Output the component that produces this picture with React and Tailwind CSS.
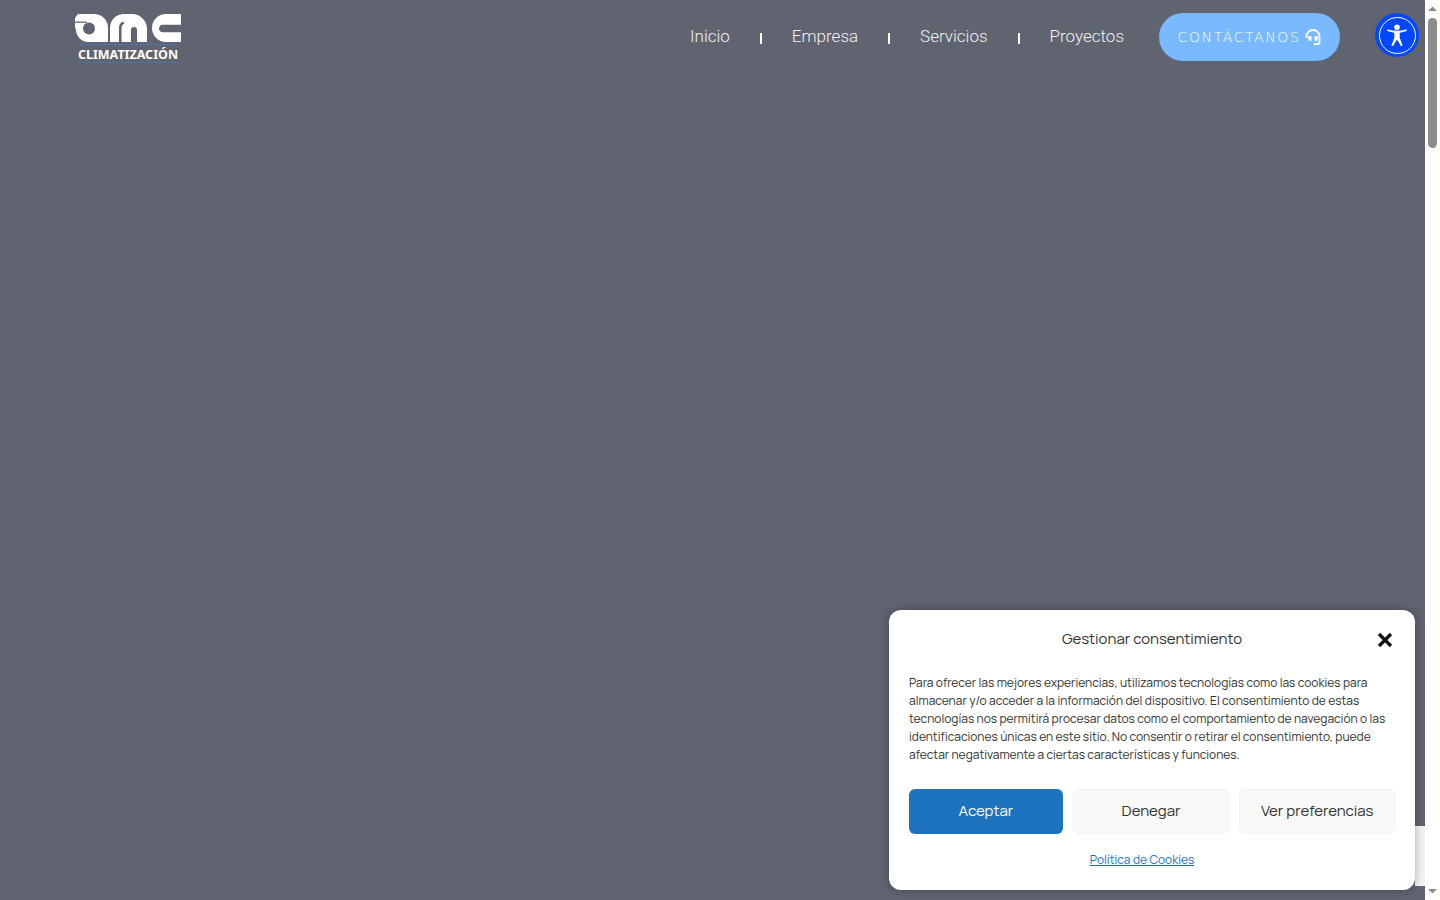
import React from "react";

const manrope = "font-['Manrope','Inter','Noto_Sans',sans-serif]";

function Logo() {
  const bg = "#606470";
  return (
    <div className="w-[106px] flex flex-col items-center mt-[2px]">
      <svg width="106" height="30" viewBox="0 0 106 30" fill="#fff">
        <path d="M3 1h16a14 14 0 0 1 14 14v14H13A12.500 12.500 0 0 1 1 16.500 12.500 12.500 0 0 1 3 1z" />
        <path d="M0 8.500h12v1.300H0z" fill={bg} />
        <circle cx="14" cy="15.500" r="6" fill={bg} />
        <path d="M35 29V15A14 14 0 0 1 49 1h8a15 15 0 0 1 15 15v13z" />
        <path d="M44 29.500V15a7 7 0 0 1 4-6.500l1.500 2a5 5 0 0 0-3 4.500v14.500z" fill={bg} />
        <path d="M56 29.500V17a3 3 0 0 1 6 0v12.500z" fill={bg} />
        <path d="M91 1h15v28H91A14 14 0 0 1 77 15 14 14 0 0 1 91 1z" />
        <path d="M84 15.500a4 4 0 0 1 4-3.800h18v7.600H88a4 4 0 0 1-4-3.800z" fill={bg} />
      </svg>
      <div className="w-[100px] h-px bg-[#3f7fc0] opacity-70 mt-[1px]" />
      <div className="font-['Noto_Sans',sans-serif] text-[12.5px] leading-[14px] font-bold text-white mt-[3px]">CLIMATIZACIÓN</div>
      <div className="w-[100px] h-px bg-[#3f7fc0] opacity-70" />
    </div>
  );
}

function Sep() {
  return <span className="w-[2px] h-[11px] bg-white mt-[2px]" />;
}

function NavLink({ children }) {
  return <a className="font-['Roboto',sans-serif] font-light text-[17px] text-[#f0f1f4]">{children}</a>;
}

function Headset() {
  return (
    <svg width="16" height="16" viewBox="0 0 16 16" fill="none" stroke="#fff" strokeWidth="1.800">
      <path d="M1.500 9V7.500a6.500 6.500 0 0 1 13 0V13a2 2 0 0 1-2 2H9" />
      <path d="M3.500 7h2.200c.5 0 .8.400.8.800v3.400c0 .5-.3.800-.8.800A2.500 2.500 0 0 1 3.200 9.500V7.300z" fill="#fff" stroke="none" />
      <path d="M12.500 7h-2.200c-.5 0-.8.400-.8.800v3.400c0 .5.300.8.800.8a2.500 2.500 0 0 0 2.500-2.500V7.300z" fill="#fff" stroke="none" />
    </svg>
  );
}

function A11y() {
  return (
    <div className="absolute left-[1375px] top-[13px] w-[44px] h-[44px] rounded-full bg-[#0048ff] flex items-center justify-center">
      <div className="w-[37px] h-[37px] rounded-full border-[1.5px] border-white flex items-center justify-center">
        <svg width="24" height="24" viewBox="0 0 24 24" fill="#fff">
          <circle cx="12" cy="4.200" r="2.800" />
          <path d="M2.500 8c-.7-.3-.4-1.700.6-1.500 2.900.8 5.900 1.200 8.900 1.200s6-.4 8.900-1.200c1-.2 1.300 1.200.6 1.500-2.300.9-4.700 1.500-6.800 1.700v5l2.700 7.400c.3 1-1.100 1.500-1.600.6L12 16.500l-3.800 6.200c-.5.900-1.900.4-1.600-.6l2.700-7.400v-5c-2.100-.2-4.500-.8-6.800-1.700z" />
        </svg>
      </div>
    </div>
  );
}

function Scrollbar() {
  return (
    <div className="w-[15px] h-full bg-white flex flex-col items-center shrink-0">
      <svg width="15" height="15" viewBox="0 0 15 15" className="shrink-0">
        <path d="M3 11 7.500 6.500 12 11z" fill="#8c8c8c" />
      </svg>
      <div className="w-[9px] h-[130px] mt-[3px] rounded-full bg-[#8c8c8c]" />
      <div className="flex-1" />
      <svg width="15" height="15" viewBox="0 0 15 15" className="shrink-0">
        <path d="M3 4 7.500 8.500 12 4z" fill="#8c8c8c" />
      </svg>
    </div>
  );
}

function Btn({ className, children }) {
  return (
    <button className={"flex-1 h-[45px] rounded-[6px] text-[15px] " + className}>{children}</button>
  );
}

function Cookie() {
  return (
    <div className={"absolute left-[889px] top-[610px] w-[526px] h-[280px] bg-white rounded-[12px] shadow-[0_0_10px_rgba(0,0,0,0.3)] px-5 text-[#222] " + manrope}>
      <div className="relative h-[57px] flex items-center justify-center pt-[1px]">
        <span className="text-[15px] font-normal text-[#333]">Gestionar consentimiento</span>
        <svg className="absolute right-[2px] top-[22px]" width="16" height="16" viewBox="0 0 16 16" stroke="#111" strokeWidth="3.2">
          <path d="M2 2 14 14M14 2 2 14" />
        </svg>
      </div>
      <p className="mt-[7px] text-[12px] leading-[18px] text-[#333]">
        Para ofrecer las mejores experiencias, utilizamos tecnologías como las cookies para
        <br />
        almacenar y/o acceder a la información del dispositivo. El consentimiento de estas
        <br />
        tecnologías nos permitirá procesar datos como el comportamiento de navegación o las
        <br />
        identificaciones únicas en este sitio. No consentir o retirar el consentimiento, puede
        <br />
        afectar negativamente a ciertas características y funciones.
      </p>
      <div className="flex gap-[10.5px] mt-[25px]">
        <Btn className="bg-[#1e73be] text-white">Aceptar</Btn>
        <Btn className="bg-[#f9f9f9] border border-[#f2f2f2] text-[#333]">Denegar</Btn>
        <Btn className="bg-[#f9f9f9] border border-[#f2f2f2] text-[#333]">Ver preferencias</Btn>
      </div>
      <div className="flex justify-center mt-[17px] pr-[20px]">
        <a className="text-[12px] leading-[18px] text-[#1e73be] underline">Política de Cookies</a>
      </div>
    </div>
  );
}

export default function App() {
  return (
    <div className="relative w-[1440px] h-[900px] overflow-hidden flex bg-white">
      <div className="flex-1 h-full bg-[#606470]">
        <header className="flex items-center h-[74px] pl-[75px] pr-[85px]">
          <Logo />
          <div className="flex-1" />
          <nav className="flex items-center gap-[30px]">
            <NavLink>Inicio</NavLink>
            <Sep />
            <NavLink>Empresa</NavLink>
            <Sep />
            <NavLink>Servicios</NavLink>
            <Sep />
            <NavLink>Proyectos</NavLink>
          </nav>
          <button className="ml-[35px] w-[181px] h-[48px] rounded-full bg-[#78b9ff] flex items-center justify-center gap-[5px] font-['DejaVu_Sans',sans-serif] font-extralight text-[14px] tracking-[1.6px] text-white">
            CONTÁCTANOS
            <Headset />
          </button>
        </header>
      </div>
      <Scrollbar />
      <div className="absolute left-[1415px] top-[826px] w-[10px] h-[60px] bg-[#f3f3f3]" />
      <A11y />
      <Cookie />
    </div>
  );
}
